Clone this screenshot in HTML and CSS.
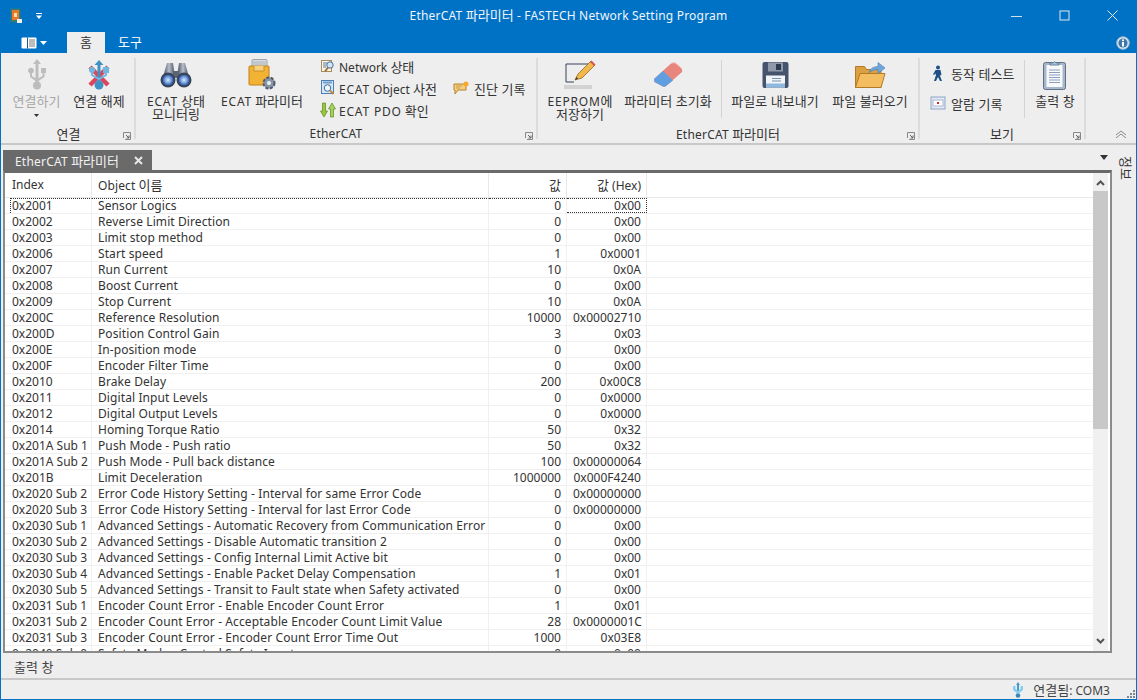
FILE: index.html
```html
<!DOCTYPE html>
<html lang="ko">
<head>
<meta charset="utf-8">
<title>EtherCAT 파라미터 - FASTECH Network Setting Program</title>
<link rel="stylesheet" href="styles.css">
</head>
<body>
<div class="window">
  <header class="titlebar">
    <svg class="app-icon" width="12" height="16" viewBox="0 0 12 16"><rect x="0.5" y="0.5" width="10" height="14" fill="#2e7d78"/><rect x="2" y="2" width="7" height="10" fill="#e8782a"/><rect x="4" y="5" width="3" height="4" fill="#ffd9a8"/><rect x="7" y="11" width="5" height="4" fill="#f2f2f2"/></svg>
    <svg class="qat" width="8" height="8" viewBox="0 0 8 8"><rect x="1" y="1" width="6" height="1" fill="#fff"/><path d="M1 3.5h6L4 7z" fill="#fff"/></svg>
    <div class="title">EtherCAT <span class="ko">파라미터</span> - FASTECH Network Setting Program</div>
    <div class="winbtns">
      <svg width="11" height="11" viewBox="0 0 11 11"><path d="M0 6.5h11" stroke="#cfe0ee"/></svg>
      <svg width="11" height="11" viewBox="0 0 11 11"><rect x="1" y="1" width="9" height="9" fill="none" stroke="#e2e8ee"/></svg>
      <svg width="11" height="11" viewBox="0 0 11 11"><path d="M0.5 0.5l10 10M10.5 0.5l-10 10" stroke="#e2e8ee"/></svg>
    </div>
  </header>
  <nav class="tabbar">
    <div class="appmenu">
      <svg width="16" height="12" viewBox="0 0 16 12"><rect x="0.5" y="0.5" width="15" height="11" rx="1" fill="#fff"/><path d="M6.5 0.5v11" stroke="#0a5a96"/><path d="M8 3h6M8 5h6M8 7h6M8 9h6" stroke="#7a7a7a"/></svg>
      <svg width="7" height="4" viewBox="0 0 7 4"><path d="M0 0h7L3.5 4z" fill="#fff"/></svg>
    </div>
    <div class="tab active ko">홈</div>
    <div class="tab plain ko">도구</div>
    <svg class="info" width="14" height="14" viewBox="0 0 14 14"><circle cx="7" cy="7" r="6.3" fill="#dfe9f2" stroke="#9db4c8"/><circle cx="7" cy="7" r="4.6" fill="#3f78ac"/><rect x="6" y="6" width="2" height="4.5" fill="#fff"/><rect x="6" y="3.4" width="2" height="1.7" fill="#fff"/></svg>
  </nav>
  <section class="ribbon">
    <div class="group g1">
      <div class="items">
        <div class="big disabled w-a">
          <svg class="ico" width="22" height="32" viewBox="0 0 22 32"><g fill="#bdbdbd"><path d="M11 0l4 5h-2.500v20h-3V5H7z"/><circle cx="11" cy="26.500" r="4"/><path d="M11 23L4 18v-3.500a3 3 0 1 1 2 0v2.500L11 20z"/><path d="M11 20l5.500-3v-3H15V9h5v5h-1.500v4L11 23z"/></g></svg>
          <span class="lbl ko">연결하기</span>
          <svg class="caret" width="5" height="3" viewBox="0 0 5 3"><path d="M0 0h5L2.500 3z" fill="#333"/></svg>
        </div>
        <div class="big w-b">
          <svg class="ico" width="24" height="32" viewBox="0 0 24 32"><path d="M3 8l18 18M21 8L3 26" stroke="#e0445c" stroke-width="4.500"/><path d="M12 1l4.500 5h-3v19h-3V6h-3z" fill="#3f93c4"/><circle cx="12" cy="26" r="4.500" fill="#3f93c4"/><rect x="16" y="8" width="6" height="6" fill="#6db8e2"/><circle cx="5" cy="11" r="3" fill="#6db8e2"/><path d="M5 13v3l7 4 7-4v-3" fill="none" stroke="#6db8e2" stroke-width="2"/></svg>
          <span class="lbl ko">연결 해제</span>
        </div>
      </div>
      <div class="glabel ko">연결<svg class="launcher" width="8" height="8" viewBox="0 0 8 8"><path d="M0.500 6V0.500H7.500V7.500H2" fill="none" stroke="#888"/><path d="M3 3l3 3M6 3.500V6H3.500" fill="none" stroke="#666"/></svg></div>
    </div>
    <div class="group g2">
      <div class="items">
        <div class="big w-c">
          <svg class="ico" width="32" height="28" viewBox="0 0 32 28"><defs><linearGradient id="bin" x1="0" x2="1"><stop offset="0" stop-color="#3c4655"/><stop offset=".5" stop-color="#b8c0cc"/><stop offset="1" stop-color="#454f5e"/></linearGradient><radialGradient id="lens"><stop offset="0" stop-color="#dbe9fb"/><stop offset=".7" stop-color="#5f8fd8"/><stop offset="1" stop-color="#2f4f8e"/></radialGradient></defs><path d="M7 2h6l2 14H3z" fill="url(#bin)"/><path d="M19 2h6l4 14H17z" fill="url(#bin)"/><rect x="13" y="10" width="6" height="7" fill="#5a6472"/><circle cx="8" cy="19" r="7.500" fill="#39465a"/><circle cx="24" cy="19" r="7.500" fill="#39465a"/><circle cx="8" cy="19" r="5.500" fill="url(#lens)"/><circle cx="24" cy="19" r="5.500" fill="url(#lens)"/></svg>
          <span class="lbl"><span class="caps">ECAT</span> <span class="ko">상태</span><br><span class="ko">모니터링</span></span>
        </div>
        <div class="big w-d">
          <svg class="ico" width="28" height="32" viewBox="0 0 28 32"><rect x="4" y="0.500" width="15" height="9" rx="1" fill="#d8dde2" stroke="#9aa4ae"/><path d="M5 3h13M5 5h13" stroke="#aab2ba"/><rect x="1" y="7" width="20" height="19" rx="1" fill="#f2b233" stroke="#c07f1c"/><path d="M6 7v5h10V7" fill="#f8d27a" stroke="#c9902f"/><circle cx="21" cy="24" r="5.500" fill="#8896a8" stroke="#4e5a6a" stroke-width="2" stroke-dasharray="3 1.500"/><circle cx="21" cy="24" r="2" fill="#eef1f4"/></svg>
          <span class="lbl"><span class="caps">ECAT</span> <span class="ko">파라미터</span></span>
        </div>
        <div class="smallcol stack">
          <div class="small"><svg width="16" height="14" viewBox="0 0 16 14"><rect x="1.500" y="1.500" width="10" height="11" fill="#fbf6e6" stroke="#a98c60"/><path d="M3 4h4M3 6h3M3 8h3" stroke="#5a7ba0"/><circle cx="10" cy="6" r="3.200" fill="#cfe4f6" stroke="#4b6f96"/><path d="M8 8.500l-3 4" stroke="#a4703a" stroke-width="2"/></svg><span>Network <span class="ko">상태</span></span></div>
          <div class="small"><svg width="16" height="16" viewBox="0 0 16 16"><rect x="1.500" y="0.500" width="12" height="13" fill="#d9e7f5" stroke="#4d7fb2"/><rect x="3" y="1.500" width="9" height="2" fill="#6f9fd0"/><circle cx="7.500" cy="8" r="3.300" fill="#eef6fd" stroke="#3c6c9e"/><path d="M10 10.500l3.500 3.500" stroke="#c28a3d" stroke-width="2"/></svg><span><span class="caps">ECAT</span> Object <span class="ko">사전</span></span></div>
          <div class="small"><svg width="16" height="16" viewBox="0 0 16 16"><path d="M2.500 1h3v8h2l-3.500 6L0.500 9h2z" fill="#9bc63f" stroke="#5a8a1d" stroke-width=".7"/><path d="M12 1l3.500 6h-2v8h-3V7h-2z" fill="#a5d25d" stroke="#5a8a1d" stroke-width=".7"/></svg><span><span class="caps">ECAT PDO</span> <span class="ko">확인</span></span></div>
        </div>
        <div class="smallcol single">
          <div class="small"><svg width="16" height="14" viewBox="0 0 16 14"><path d="M1 3h10l2-2v8H5l-3 4V9H1z" fill="#f4cf7e" stroke="#b9812c"/><path d="M3 5h6M3 7h4" stroke="#c99a4a"/><circle cx="13" cy="3" r="2.500" fill="#f7a92b"/></svg><span class="ko">진단 기록</span></div>
        </div>
      </div>
      <div class="glabel latin">EtherCAT<svg class="launcher" width="8" height="8" viewBox="0 0 8 8"><path d="M0.500 6V0.500H7.500V7.500H2" fill="none" stroke="#888"/><path d="M3 3l3 3M6 3.500V6H3.500" fill="none" stroke="#666"/></svg></div>
    </div>
    <div class="group g3">
      <div class="items">
        <div class="big w-e">
          <svg class="ico" width="32" height="32" viewBox="0 0 32 32"><path d="M24 5H2v18h8" fill="none" stroke="#34435a" stroke-width="1"/><rect x="0" y="26" width="28" height="4" fill="#d2d2d2"/><path d="M11 21l3-6L27 2l4 4-13 13z" fill="#f2b84b" stroke="#8f6a25" stroke-width=".8"/><path d="M26 3l4 4 1.500-1.500-4-4z" fill="#d9534f"/><path d="M11 21l1.500-3 1.500 1.500z" fill="#333"/></svg>
          <span class="lbl"><span class="caps">EEPROM</span><span class="ko">에</span><br><span class="ko">저장하기</span></span>
        </div>
        <div class="big w-f">
          <svg class="ico" width="30" height="26" viewBox="0 0 30 26"><path d="M1 17L18 1.500q3-1.500 5 0l5.500 5q1.500 2 0 4L13 24q-2 1.500-4 0L1.500 20z" fill="#e8857c"/><path d="M1 17L10 9l10 9.500-7 5.500q-2 1.500-4 0L1.500 20z" fill="#5f9fe0"/><path d="M18 1.500q3-1.500 5 0l5.500 5" fill="none" stroke="#f3b4ac"/></svg>
          <span class="lbl ko">파라미터 초기화</span>
        </div>
        <div class="rsep sep-a"></div>
        <div class="big w-g">
          <svg class="ico" width="27" height="27" viewBox="0 0 27 27"><rect x="0.500" y="0.500" width="26" height="26" rx="2" fill="#46536c"/><rect x="6" y="1" width="15" height="9" fill="#8f99aa"/><rect x="14" y="2.500" width="5" height="6" fill="#2e3a4e"/><rect x="4" y="14" width="19" height="12" fill="#f2f5f8"/><rect x="4" y="22" width="19" height="4" fill="#8fb8de"/><path d="M10 17h9M10 19.500h9" stroke="#7890aa"/></svg>
          <span class="lbl ko">파일로 내보내기</span>
        </div>
        <div class="big w-h">
          <svg class="ico" width="31" height="27" viewBox="0 0 31 27"><path d="M0.500 26V5h9l2 3H26v18z" fill="#dba042" stroke="#b37a25"/><path d="M5 12h25l-4 14H0.500z" fill="#f4bd60" stroke="#b37a25"/><path d="M14 11q2-6 9-6V1l7 5.500-7 5.500V8q-5 0-9 3z" fill="#6fa6dc" stroke="#4c7cae" stroke-width=".6"/></svg>
          <span class="lbl ko">파일 불러오기</span>
        </div>
      </div>
      <div class="glabel latin">EtherCAT <span class="ko">파라미터</span><svg class="launcher" width="8" height="8" viewBox="0 0 8 8"><path d="M0.500 6V0.500H7.500V7.500H2" fill="none" stroke="#888"/><path d="M3 3l3 3M6 3.500V6H3.500" fill="none" stroke="#666"/></svg></div>
    </div>
    <div class="group g4">
      <div class="items">
        <div class="smallcol view">
          <div class="small"><svg width="16" height="16" viewBox="0 0 16 16"><circle cx="8" cy="2.500" r="2" fill="#1d4f86"/><path d="M5.500 5h5l1 5-1.500.5-.5-2L10 11l2 5H10L8 12 6 16H4l2-6-.5-1.500L4 10l-1-.5z" fill="#1d4f86"/></svg><span class="ko">동작 테스트</span></div>
          <div class="small"><svg width="16" height="16" viewBox="0 0 16 16"><rect x="1" y="2" width="14" height="12" fill="#e4eaf4" stroke="#8ea3c6"/><rect x="3" y="5" width="10" height="6" fill="#fff" stroke="#aab6cc"/><rect x="7" y="7" width="2" height="2" fill="#d8212f"/></svg><span class="ko">알람 기록</span></div>
        </div>
        <div class="rsep"></div>
        <div class="big w-i">
          <svg class="ico" width="24" height="30" viewBox="0 0 24 30"><rect x="0.500" y="2.500" width="22" height="27" rx="2" fill="#a8b6c9" stroke="#5f6f86"/><rect x="3.500" y="5" width="16" height="22" fill="#f7f9fb"/><path d="M6 10h11M6 12.500h11M6 15h11M6 17.500h11M6 20h11M6 22.500h11" stroke="#8c9fc0"/><path d="M7 5V3h3q1.500-2.500 3 0h3v2z" fill="#b8c8dc" stroke="#5f7f9e"/></svg>
          <span class="lbl ko">출력 창</span>
        </div>
      </div>
      <div class="glabel ko">보기<svg class="launcher" width="8" height="8" viewBox="0 0 8 8"><path d="M0.500 6V0.500H7.500V7.500H2" fill="none" stroke="#888"/><path d="M3 3l3 3M6 3.500V6H3.500" fill="none" stroke="#666"/></svg></div>
    </div>
    <svg class="collapse" width="12" height="8" viewBox="0 0 12 8"><path d="M1 5l5-4 5 4M1 8l5-4 5 4" fill="none" stroke="#8a8a8a"/></svg>
  </section>
  <main class="content">
    <div class="docarea">
      <div class="doctabs">
        <div class="doctab"><span>EtherCAT <span class="ko">파라미터</span></span><svg width="9" height="9" viewBox="0 0 9 9"><path d="M1 1l7 7M8 1L1 8" stroke="#e8e8e8" stroke-width="2"/></svg></div>
        <svg class="tabmenu" width="8" height="5" viewBox="0 0 8 5"><path d="M0 0h8L4 5z" fill="#333"/></svg>
      </div>
      <div class="gridframe">
        <div class="gridview">
          <div class="grid" id="grid">
            <div class="hrow">
              <div class="c c-i">Index</div><div class="c c-n">Object <span class="ko">이름</span></div><div class="c c-v ko">값</div><div class="c c-h"><span class="ko">값</span> (Hex)</div><div class="c c-f"></div>
            </div>
            <div class="row"><div class="c c-i sel">0x2001</div><div class="c c-n sel">Sensor Logics</div><div class="c c-v sel">0</div><div class="c c-h sel last">0x00</div><div class="c c-f"></div></div>
            <div class="row"><div class="c c-i">0x2002</div><div class="c c-n">Reverse Limit Direction</div><div class="c c-v">0</div><div class="c c-h">0x00</div><div class="c c-f"></div></div>
            <div class="row"><div class="c c-i">0x2003</div><div class="c c-n">Limit stop method</div><div class="c c-v">0</div><div class="c c-h">0x00</div><div class="c c-f"></div></div>
            <div class="row"><div class="c c-i">0x2006</div><div class="c c-n">Start speed</div><div class="c c-v">1</div><div class="c c-h">0x0001</div><div class="c c-f"></div></div>
            <div class="row"><div class="c c-i">0x2007</div><div class="c c-n">Run Current</div><div class="c c-v">10</div><div class="c c-h">0x0A</div><div class="c c-f"></div></div>
            <div class="row"><div class="c c-i">0x2008</div><div class="c c-n">Boost Current</div><div class="c c-v">0</div><div class="c c-h">0x00</div><div class="c c-f"></div></div>
            <div class="row"><div class="c c-i">0x2009</div><div class="c c-n">Stop Current</div><div class="c c-v">10</div><div class="c c-h">0x0A</div><div class="c c-f"></div></div>
            <div class="row"><div class="c c-i">0x200C</div><div class="c c-n">Reference Resolution</div><div class="c c-v">10000</div><div class="c c-h">0x00002710</div><div class="c c-f"></div></div>
            <div class="row"><div class="c c-i">0x200D</div><div class="c c-n">Position Control Gain</div><div class="c c-v">3</div><div class="c c-h">0x03</div><div class="c c-f"></div></div>
            <div class="row"><div class="c c-i">0x200E</div><div class="c c-n">In-position mode</div><div class="c c-v">0</div><div class="c c-h">0x00</div><div class="c c-f"></div></div>
            <div class="row"><div class="c c-i">0x200F</div><div class="c c-n">Encoder Filter Time</div><div class="c c-v">0</div><div class="c c-h">0x00</div><div class="c c-f"></div></div>
            <div class="row"><div class="c c-i">0x2010</div><div class="c c-n">Brake Delay</div><div class="c c-v">200</div><div class="c c-h">0x00C8</div><div class="c c-f"></div></div>
            <div class="row"><div class="c c-i">0x2011</div><div class="c c-n">Digital Input Levels</div><div class="c c-v">0</div><div class="c c-h">0x0000</div><div class="c c-f"></div></div>
            <div class="row"><div class="c c-i">0x2012</div><div class="c c-n">Digital Output Levels</div><div class="c c-v">0</div><div class="c c-h">0x0000</div><div class="c c-f"></div></div>
            <div class="row"><div class="c c-i">0x2014</div><div class="c c-n">Homing Torque Ratio</div><div class="c c-v">50</div><div class="c c-h">0x32</div><div class="c c-f"></div></div>
            <div class="row"><div class="c c-i">0x201A Sub 1</div><div class="c c-n">Push Mode - Push ratio</div><div class="c c-v">50</div><div class="c c-h">0x32</div><div class="c c-f"></div></div>
            <div class="row"><div class="c c-i">0x201A Sub 2</div><div class="c c-n">Push Mode - Pull back distance</div><div class="c c-v">100</div><div class="c c-h">0x00000064</div><div class="c c-f"></div></div>
            <div class="row"><div class="c c-i">0x201B</div><div class="c c-n">Limit Deceleration</div><div class="c c-v">1000000</div><div class="c c-h">0x000F4240</div><div class="c c-f"></div></div>
            <div class="row"><div class="c c-i">0x2020 Sub 2</div><div class="c c-n">Error Code History Setting - Interval for same Error Code</div><div class="c c-v">0</div><div class="c c-h">0x00000000</div><div class="c c-f"></div></div>
            <div class="row"><div class="c c-i">0x2020 Sub 3</div><div class="c c-n">Error Code History Setting - Interval for last Error Code</div><div class="c c-v">0</div><div class="c c-h">0x00000000</div><div class="c c-f"></div></div>
            <div class="row"><div class="c c-i">0x2030 Sub 1</div><div class="c c-n">Advanced Settings - Automatic Recovery from Communication Error</div><div class="c c-v">0</div><div class="c c-h">0x00</div><div class="c c-f"></div></div>
            <div class="row"><div class="c c-i">0x2030 Sub 2</div><div class="c c-n">Advanced Settings - Disable Automatic transition 2</div><div class="c c-v">0</div><div class="c c-h">0x00</div><div class="c c-f"></div></div>
            <div class="row"><div class="c c-i">0x2030 Sub 3</div><div class="c c-n">Advanced Settings - Config Internal Limit Active bit</div><div class="c c-v">0</div><div class="c c-h">0x00</div><div class="c c-f"></div></div>
            <div class="row"><div class="c c-i">0x2030 Sub 4</div><div class="c c-n">Advanced Settings - Enable Packet Delay Compensation</div><div class="c c-v">1</div><div class="c c-h">0x01</div><div class="c c-f"></div></div>
            <div class="row"><div class="c c-i">0x2030 Sub 5</div><div class="c c-n">Advanced Settings - Transit to Fault state when Safety activated</div><div class="c c-v">0</div><div class="c c-h">0x00</div><div class="c c-f"></div></div>
            <div class="row"><div class="c c-i">0x2031 Sub 1</div><div class="c c-n">Encoder Count Error - Enable Encoder Count Error</div><div class="c c-v">1</div><div class="c c-h">0x01</div><div class="c c-f"></div></div>
            <div class="row"><div class="c c-i">0x2031 Sub 2</div><div class="c c-n">Encoder Count Error - Acceptable Encoder Count Limit Value</div><div class="c c-v">28</div><div class="c c-h">0x0000001C</div><div class="c c-f"></div></div>
            <div class="row"><div class="c c-i">0x2031 Sub 3</div><div class="c c-n">Encoder Count Error - Encoder Count Error Time Out</div><div class="c c-v">1000</div><div class="c c-h">0x03E8</div><div class="c c-f"></div></div>
            <div class="row"><div class="c c-i">0x2040 Sub 0</div><div class="c c-n">Safety Mode - Control Safety Input</div><div class="c c-v">0</div><div class="c c-h">0x00</div><div class="c c-f"></div></div>
          </div>
          <div class="vscroll">
            <svg width="9" height="6" viewBox="0 0 9 6"><path d="M1 5l3.500-3.500L8 5" fill="none" stroke="#555" stroke-width="2"/></svg>
            <div class="track"><div class="thumb"></div></div>
            <svg width="9" height="6" viewBox="0 0 9 6"><path d="M1 1l3.500 3.500L8 1" fill="none" stroke="#555" stroke-width="2"/></svg>
          </div>
        </div>
      </div>
      <div class="outputtab ko">출력 창</div>
    </div>
    <aside class="sidetab"><span class="ko">정보</span></aside>
  </main>
  <footer class="statusbar">
    <svg width="12" height="16" viewBox="0 0 12 16"><path d="M6 0l2 3H7v9H5V3H4z" fill="#4a9ac9"/><circle cx="6" cy="13.500" r="2.300" fill="#3f86b5"/><path d="M1 4h2.500v3l2.500 2 2.500-2V4H11v4l-5 4-5-4z" fill="#86cdf0"/></svg>
    <span class="status-text"><span class="ko">연결됨</span>: COM3</span>
    <svg class="grip" width="8" height="8" viewBox="0 0 8 8"><path d="M6 0h2v2H6zM3 3h2v2H3zM6 3h2v2H6zM0 6h2v2H0zM3 6h2v2H3zM6 6h2v2H6z" fill="#7a8794"/></svg>
  </footer>
</div>
</body>
</html>
```
FILE: styles.css
```css
* { box-sizing: border-box; }
html, body { margin: 0; height: 100%; }
body { font-family: "Noto Sans", "Noto Sans CJK KR", sans-serif; font-size: 12px; color: #333; overflow: hidden; }
.ko { font-size: 13px; font-family: "Noto Sans CJK KR", "Noto Sans", sans-serif; letter-spacing: 0; }
.caps { letter-spacing: .8px; }
.latin { letter-spacing: .2px; }
.window { width: 1137px; height: 700px; display: flex; flex-direction: column; background: #eeeeee; border: 1px solid #0072c6; border-top: 0; }
.titlebar { height: 32px; flex: none; background: #0072c6; display: flex; align-items: center; padding-left: 9px; color: #f0f4f8; position: relative; }
.app-icon { flex: none; }
.qat { margin-left: 13px; }
.title { position: absolute; left: 0; right: 0; top: 6px; text-align: center; font-size: 12px; line-height: 18px; letter-spacing: .2px; }
.winbtns { position: absolute; right: 0; top: 0; display: flex; gap: 37px; padding: 10px 18px 0 0; }
.tabbar { height: 21px; flex: none; background: #0072c6; display: flex; position: relative; }
.appmenu { width: 66px; padding: 4px 0 0 20px; display: flex; gap: 3px; align-items: center; height: 17px; }
.tab { width: 38px; height: 21px; color: #fff; text-align: center; line-height: 20px; }
.tab.plain { width: 50px; }
.tab.active { background: #eeeeee; color: #333; }
.info { position: absolute; right: 6px; top: 4px; }
.ribbon { height: 92px; flex: none; background: #eeeeee; border-bottom: 2px solid #c8c8c8; display: flex; position: relative; padding-left: 2px; }
.group { display: flex; flex-direction: column; border-right: 2px solid #dcdcdc; margin: 5px 0 4px; }
.g1 { width: 133px; }
.g2 { width: 402px; }
.g3 { width: 382px; }
.g4 { width: 166px; }
.items { flex: 1; min-height: 0; display: flex; margin-top: -3px; }
.g1 .items { padding-left: 2px; }
.big { display: flex; flex-direction: column; align-items: center; flex: none; position: relative; padding-top: 4px; line-height: 12px; text-align: center; }
.big .ico { height: 32px; flex: none; margin-bottom: 4px; }
.lbl { display: block; white-space: nowrap; }
.disabled { color: #a8a8a8; }
.caret { margin-top: 7px; }
.w-a { width: 63px; }
.w-b { width: 62px; }
.w-c { width: 80px; }
.w-d { width: 92px; }
.w-e { width: 84px; }
.w-f { width: 92px; }
.w-g { width: 106px; }
.w-h { width: 84px; }
.w-i { width: 60px; }
.rsep { width: 1px; height: 58px; background: #d4d4d4; margin-top: 5px; flex: none; }
.sep-a { margin-left: 7px; }
.smallcol { display: flex; flex-direction: column; flex: none; }
.stack { width: 134px; padding: 0 0 0 12px; }
.stack .small { gap: 3px; }
.single { width: 84px; padding: 22px 0 0 11px; }
.single .small { gap: 5px; }
.view { width: 104px; padding: 7px 0 0 10px; gap: 8px; }
.view .small { gap: 5px; }
.small { display: flex; align-items: center; gap: 4px; height: 22px; white-space: nowrap; }
.small svg { flex: none; }
.glabel { height: 14px; line-height: 18px; text-align: center; position: relative; flex: none; }
.launcher { position: absolute; right: 3px; bottom: -1px; }
.collapse { position: absolute; left: 1114px; top: 77px; }
.content { flex: 1; display: flex; min-height: 0; }
.docarea { width: 1111px; flex: none; display: flex; flex-direction: column; padding-left: 2px; }
.doctabs { height: 25px; flex: none; display: flex; position: relative; align-items: flex-end; }
.doctab { width: 149px; height: 20px; background: #6a6a6a; color: #f2f2f2; display: flex; align-items: center; justify-content: space-between; padding: 0 9px 0 12px; letter-spacing: .2px; }
.tabmenu { position: absolute; right: 4px; top: 10px; }
.gridframe { height: 483px; flex: none; border: 2px solid #8b8b8b; border-top: 3px solid #6a6a6a; background: #fff; }
.gridview { height: 100%; display: flex; overflow: hidden; }
.grid { flex: 1; overflow: hidden; min-width: 0; }
.hrow { height: 25px; display: flex; border-bottom: 1px solid #e8e8e8; align-items: stretch; }
.row { height: 16px; display: flex; border-bottom: 1px solid #f0f0f0; }
.c { line-height: 15px; padding: 0 5px 0 6px; white-space: nowrap; overflow: hidden; color: #333; flex: none; border-right: 1px solid #f0f0f0; }
.hrow .c { line-height: 24px; border-right-color: #e8e8e8; }
.c-i { width: 82px; margin-left: 5px; padding-left: 2px; }
.c-n { width: 397px; letter-spacing: .1px; }
.c-v { width: 78px; text-align: right; }
.c-h { width: 80px; text-align: right; }
.c-f { flex: 1; border-right: 0; }
.sel { border-top: 1px dotted #333; line-height: 14px; }
.sel.c-i { border-left: 1px dotted #333; padding-left: 1px; }
.sel.last { border-right: 1px dotted #333; border-bottom: 1px dotted #333; }
.vscroll { width: 15px; margin-right: 2px; flex: none; background: #f0f0f0; display: flex; flex-direction: column; align-items: center; padding: 7px 0; }
.track { flex: 1; width: 100%; margin: 3px 0; }
.thumb { height: 238px; background: #c8c8c8; margin-top: 2px; }
.outputtab { height: 25px; line-height: 28px; padding-left: 11px; color: #444; flex: none; }
.sidetab { flex: 1; padding: 11px 0 0 3px; display: flex; justify-content: center; }
.sidetab span { display: block; writing-mode: vertical-rl; text-orientation: sideways; line-height: 14px; letter-spacing: 0; }
.statusbar { height: 21px; flex: none; border-top: 2px solid #c8c8c8; display: flex; align-items: center; justify-content: flex-end; padding-right: 26px; gap: 9px; position: relative; background: #eeeeee; }
.status-text { color: #444; }
.grip { position: absolute; right: 1px; bottom: 1px; }
```
